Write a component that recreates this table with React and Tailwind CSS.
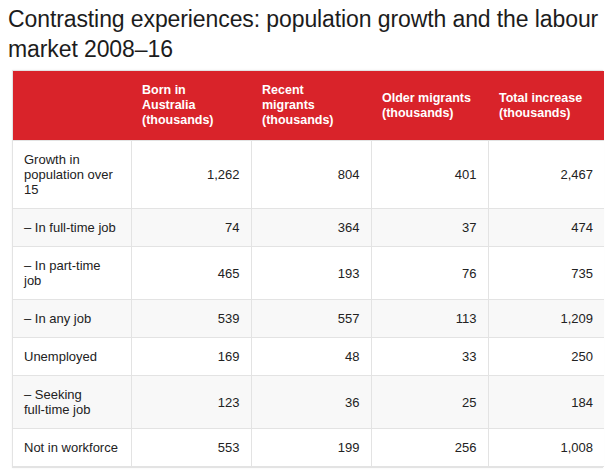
import React from "react";

const rows = [
  { label: ["Growth in", "population over", "15"], values: ["1,262", "804", "401", "2,467"] },
  { label: ["– In full-time job"], values: ["74", "364", "37", "474"] },
  { label: ["– In part-time", "job"], values: ["465", "193", "76", "735"] },
  { label: ["– In any job"], values: ["539", "557", "113", "1,209"] },
  { label: ["Unemployed"], values: ["169", "48", "33", "250"] },
  { label: ["– Seeking", "full-time job"], values: ["123", "36", "25", "184"] },
  { label: ["Not in workforce"], values: ["553", "199", "256", "1,008"] },
];

const headers = [
  ["Born in", "Australia", "(thousands)"],
  ["Recent", "migrants", "(thousands)"],
  ["Older migrants", "(thousands)"],
  ["Total increase", "(thousands)"],
];

const Lines = ({ lines }) =>
  lines.map((l, i) => (
    <React.Fragment key={i}>
      {i > 0 && <br />}
      {l}
    </React.Fragment>
  ));

const App = () => {
  return (
    <div className="w-[612px] h-[473px] bg-white overflow-hidden font-['Liberation_Sans',Arial,sans-serif]">
      <h1 className="pl-2 pt-1 text-[23px] leading-[30px] font-normal text-[#1c1c1c] tracking-[-0.1px]">
        Contrasting experiences: population growth and the labour market 2008–16
      </h1>
      <div className="ml-3 mt-[6px] w-[591px] border border-[#e3e3e3] shadow-[0_0_2px_rgba(0,0,0,0.06)]">
        <table className="w-full table-fixed border-collapse text-[13px] leading-[15px] text-[#222]">
          <colgroup>
            <col className="w-[118px]" />
            <col className="w-[120px]" />
            <col className="w-[120px]" />
            <col className="w-[117px]" />
            <col className="w-[116px]" />
          </colgroup>
          <thead>
            <tr className="bg-[#d9232a] text-white">
              <th className="py-[12px]"></th>
              {headers.map((h, i) => (
                <th
                  key={i}
                  className="px-[11px] py-[12px] text-left align-middle text-[12.5px] font-bold leading-[15px]"
                >
                  <Lines lines={h} />
                </th>
              ))}
            </tr>
          </thead>
          <tbody>
            {rows.map((r, i) => (
              <tr key={i} className={i % 2 === 1 ? "bg-[#f8f8f8]" : "bg-white"}>
                <td className="border border-[#e3e3e3] border-l-0 px-[11px] py-[11px] align-middle">
                  <Lines lines={r.label} />
                </td>
                {r.values.map((v, j) => (
                  <td
                    key={j}
                    className={
                      "border border-[#e3e3e3] px-[11px] py-[11px] text-right align-middle" +
                      (j === 3 ? " border-r-0" : "")
                    }
                  >
                    {v}
                  </td>
                ))}
              </tr>
            ))}
          </tbody>
        </table>
      </div>
    </div>
  );
};

export default App;
